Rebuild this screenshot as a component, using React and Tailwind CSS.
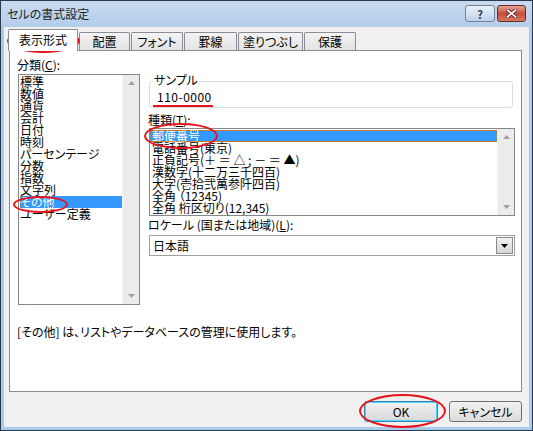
import React from "react";

function Tri({ up, color = "#a0a0a0" }) {
  return (
    <svg width="7" height="4" viewBox="0 0 7 4">
      {up ? <polygon points="0,4 7,4 3.5,0" fill={color} /> : <polygon points="0,0 7,0 3.5,4" fill={color} />}
    </svg>
  );
}

function VScroll() {
  return (
    <div className="w-[17px] self-stretch bg-[#ececec] border-l border-[#f5f5f5] flex flex-col justify-between items-center pt-[6px] pb-[6px]">
      <Tri up />
      <Tri />
    </div>
  );
}

const leftItems = ["標準", "数値", "通貨", "会計", "日付", "時刻", "パーセンテージ", "分数", "指数", "文字列", "その他", "ユーザー定義"];
const typeItems = [
  "郵便番号",
  "電話番号(東京)",
  "正負記号(＋ ＝ △ ; － ＝ ▲)",
  "漢数字(十二万三千四百)",
  "大字(壱拾弐萬参阡四百)",
  "全角 （12345)",
  "全角 桁区切り(12,345)",
];

function Tab({ label, w, selected }) {
  if (selected) {
    return (
      <div className={`relative z-10 h-[22px] bg-white border border-b-0 border-[#898c95] rounded-t-[2px] flex items-center justify-center pb-[2px]`} style={{ width: w }}>
        {label}
      </div>
    );
  }
  return (
    <div className="mt-[3px] h-[18px] bg-gradient-to-b from-[#f4f4f4] to-[#e2e2e2] border border-b-0 border-[#898c95] rounded-t-[2px] flex items-center justify-center" style={{ width: w }}>
      {label}
    </div>
  );
}

export default function App() {
  return (
    <div className="relative w-[533px] h-[431px] bg-[#a9cbec] border border-[#2a3a4e] flex flex-col text-[12px] leading-[12px] text-black font-['Noto_Sans_CJK_JP','Noto_Sans',sans-serif] [font-feature-settings:'palt'] overflow-hidden">
      {/* title bar */}
      <div className="h-[26px] shrink-0 flex bg-gradient-to-b from-[#c9dcf1] to-[#b3cdea]">
        <div className="pl-[6px] flex items-center text-[12px] text-[#1e1e1e]">セルの書式設定</div>
        <div className="ml-auto mr-[6px] mt-[4px] flex gap-[2px] items-start">
          <div className="w-[30px] h-[17px] rounded-[3px] border border-[#71829a] bg-gradient-to-b from-[#eaf1fa] to-[#bed1ea] flex items-center justify-center text-[11px] font-bold text-[#2b3a4e]">?</div>
          <div className="w-[29px] h-[17px] rounded-[3px] border border-[#6b2a22] bg-gradient-to-b from-[#e3a599] via-[#c8493e] to-[#d67a63] flex items-center justify-center">
            <svg width="11" height="9" viewBox="0 0 11 9">
              <path d="M1.5 1.2 L9.5 7.8 M9.5 1.2 L1.5 7.8" stroke="#4a1a14" strokeWidth="3.4" strokeLinecap="square" />
              <path d="M1.5 1.2 L9.5 7.8 M9.5 1.2 L1.5 7.8" stroke="#ffffff" strokeWidth="1.8" strokeLinecap="square" />
            </svg>
          </div>
        </div>
      </div>

      {/* client area */}
      <div className="mx-[3px] h-[400px] bg-[#f0f0f0] flex flex-col">
        {/* tabs */}
        <div className="mt-[2px] h-[21px] pl-[4px] flex items-start">
          <Tab label="表示形式" w={70} selected />
          <div className="w-px" />
          <Tab label="配置" w={51} />
          <div className="w-px" />
          <Tab label="フォント" w={52} />
          <div className="w-px" />
          <Tab label="罫線" w={53} />
          <div className="w-px" />
          <Tab label="塗りつぶし" w={65} />
          <div className="w-px" />
          <Tab label="保護" w={52} />
        </div>

        {/* panel */}
        <div className="ml-[5px] w-[513px] h-[342px] bg-white border border-[#898c95] flex flex-col pt-[8px] pl-[7px]">
          <div className="flex items-start">
            {/* left column */}
            <div className="w-[123px] flex flex-col">
              <div className="h-[12px]">分類(<span className="underline">C</span>):</div>
              <div className="mt-[3px] ml-[1px] w-[122px] h-[231px] border border-[#828790] flex">
                <div className="flex-1 pt-[1px] pl-[1px]">
                  {leftItems.map((it) => (
                    <div
                      key={it}
                      className={`h-[12px] leading-[12px] whitespace-nowrap ${it === "その他" ? "bg-[#3399ff] text-white outline-1 outline-dotted outline-offset-[-1px] outline-[#c87a2c]" : ""}`}
                    >
                      {it}
                    </div>
                  ))}
                </div>
                <VScroll />
              </div>
            </div>

            {/* right column */}
            <div className="ml-[8px] w-[367px] flex flex-col pt-[22px]">
              <div className="relative ml-[1px] w-[364px] h-[27px] border border-[#d5dfe5] rounded-[3px] pt-[9px] pl-[7px]">
                <div className="absolute left-[3px] top-[-8px] bg-white px-[1px]">サンプル</div>
                <div className="tracking-[0.5px]">110-0000</div>
              </div>
              <div className="mt-[6px] h-[12px]">種類(<span className="underline">T</span>):</div>
              <div className="mt-[2px] ml-[1px] w-[366px] h-[88px] border border-[#828790] flex">
                <div className="flex-1 pt-[1px]">
                  {typeItems.map((it, i) => (
                    <div
                      key={it}
                      className={`h-[12px] leading-[12px] pl-[2px] whitespace-nowrap ${i === 0 ? "bg-[#3399ff] text-white outline-1 outline-dotted outline-offset-[-1px] outline-[#c87a2c]" : ""}`}
                    >
                      {it}
                    </div>
                  ))}
                </div>
                <VScroll />
              </div>
              <div className="mt-[3px] h-[12px]">ロケール (国または地域)(<span className="underline">L</span>):</div>
              <div className="mt-[4px] ml-[1px] w-[366px] h-[21px] border border-[#a0a0a0] flex items-center">
                <div className="flex-1 pl-[3px]">日本語</div>
                <div className="w-[17px] h-[17px] mr-[1px] border border-[#8a8a8a] bg-gradient-to-b from-[#f2f2f2] to-[#d6d6d6] flex items-center justify-center">
                  <svg width="7" height="4" viewBox="0 0 7 4"><polygon points="0,0 7,0 3.5,4" fill="#000" /></svg>
                </div>
              </div>
            </div>
          </div>
          <div className="mt-[21px] whitespace-nowrap">[その他] は、リストやデータベースの管理に使用します。</div>
        </div>

        {/* buttons */}
        <div className="mt-[9px] flex justify-end pr-[7px] gap-[11px]">
          <div className="w-[74px] h-[21px] rounded-[3px] border border-[#3c7fb1] shadow-[inset_0_0_0_1px_#48d8ff] bg-gradient-to-b from-[#f2f2f2] to-[#d9d9d9] flex items-center justify-center">OK</div>
          <div className="w-[73px] h-[21px] rounded-[3px] border border-[#707070] bg-gradient-to-b from-[#f2f2f2] to-[#dcdcdc] flex items-center justify-center">キャンセル</div>
        </div>
      </div>

      {/* red annotation marks */}
      <div className="absolute left-[6px] top-[28px] w-[73px] h-[24px] rounded-[50%] border-2 border-[#e8141b] pointer-events-none" />
      <div className="absolute left-[12px] top-[195px] w-[55px] h-[17px] rounded-[50%] border-2 border-[#e8141b] pointer-events-none" />
      <div className="absolute left-[143px] top-[122px] w-[74px] h-[26px] rounded-[50%] border-2 border-[#e8141b] pointer-events-none" />
      <div className="absolute left-[358px] top-[393px] w-[87px] h-[34px] rounded-[50%] border-2 border-[#e8141b] pointer-events-none" />
      <div className="absolute left-[152px] top-[104px] w-[60px] h-[2px] bg-[#e8141b] pointer-events-none" />
    </div>
  );
}
